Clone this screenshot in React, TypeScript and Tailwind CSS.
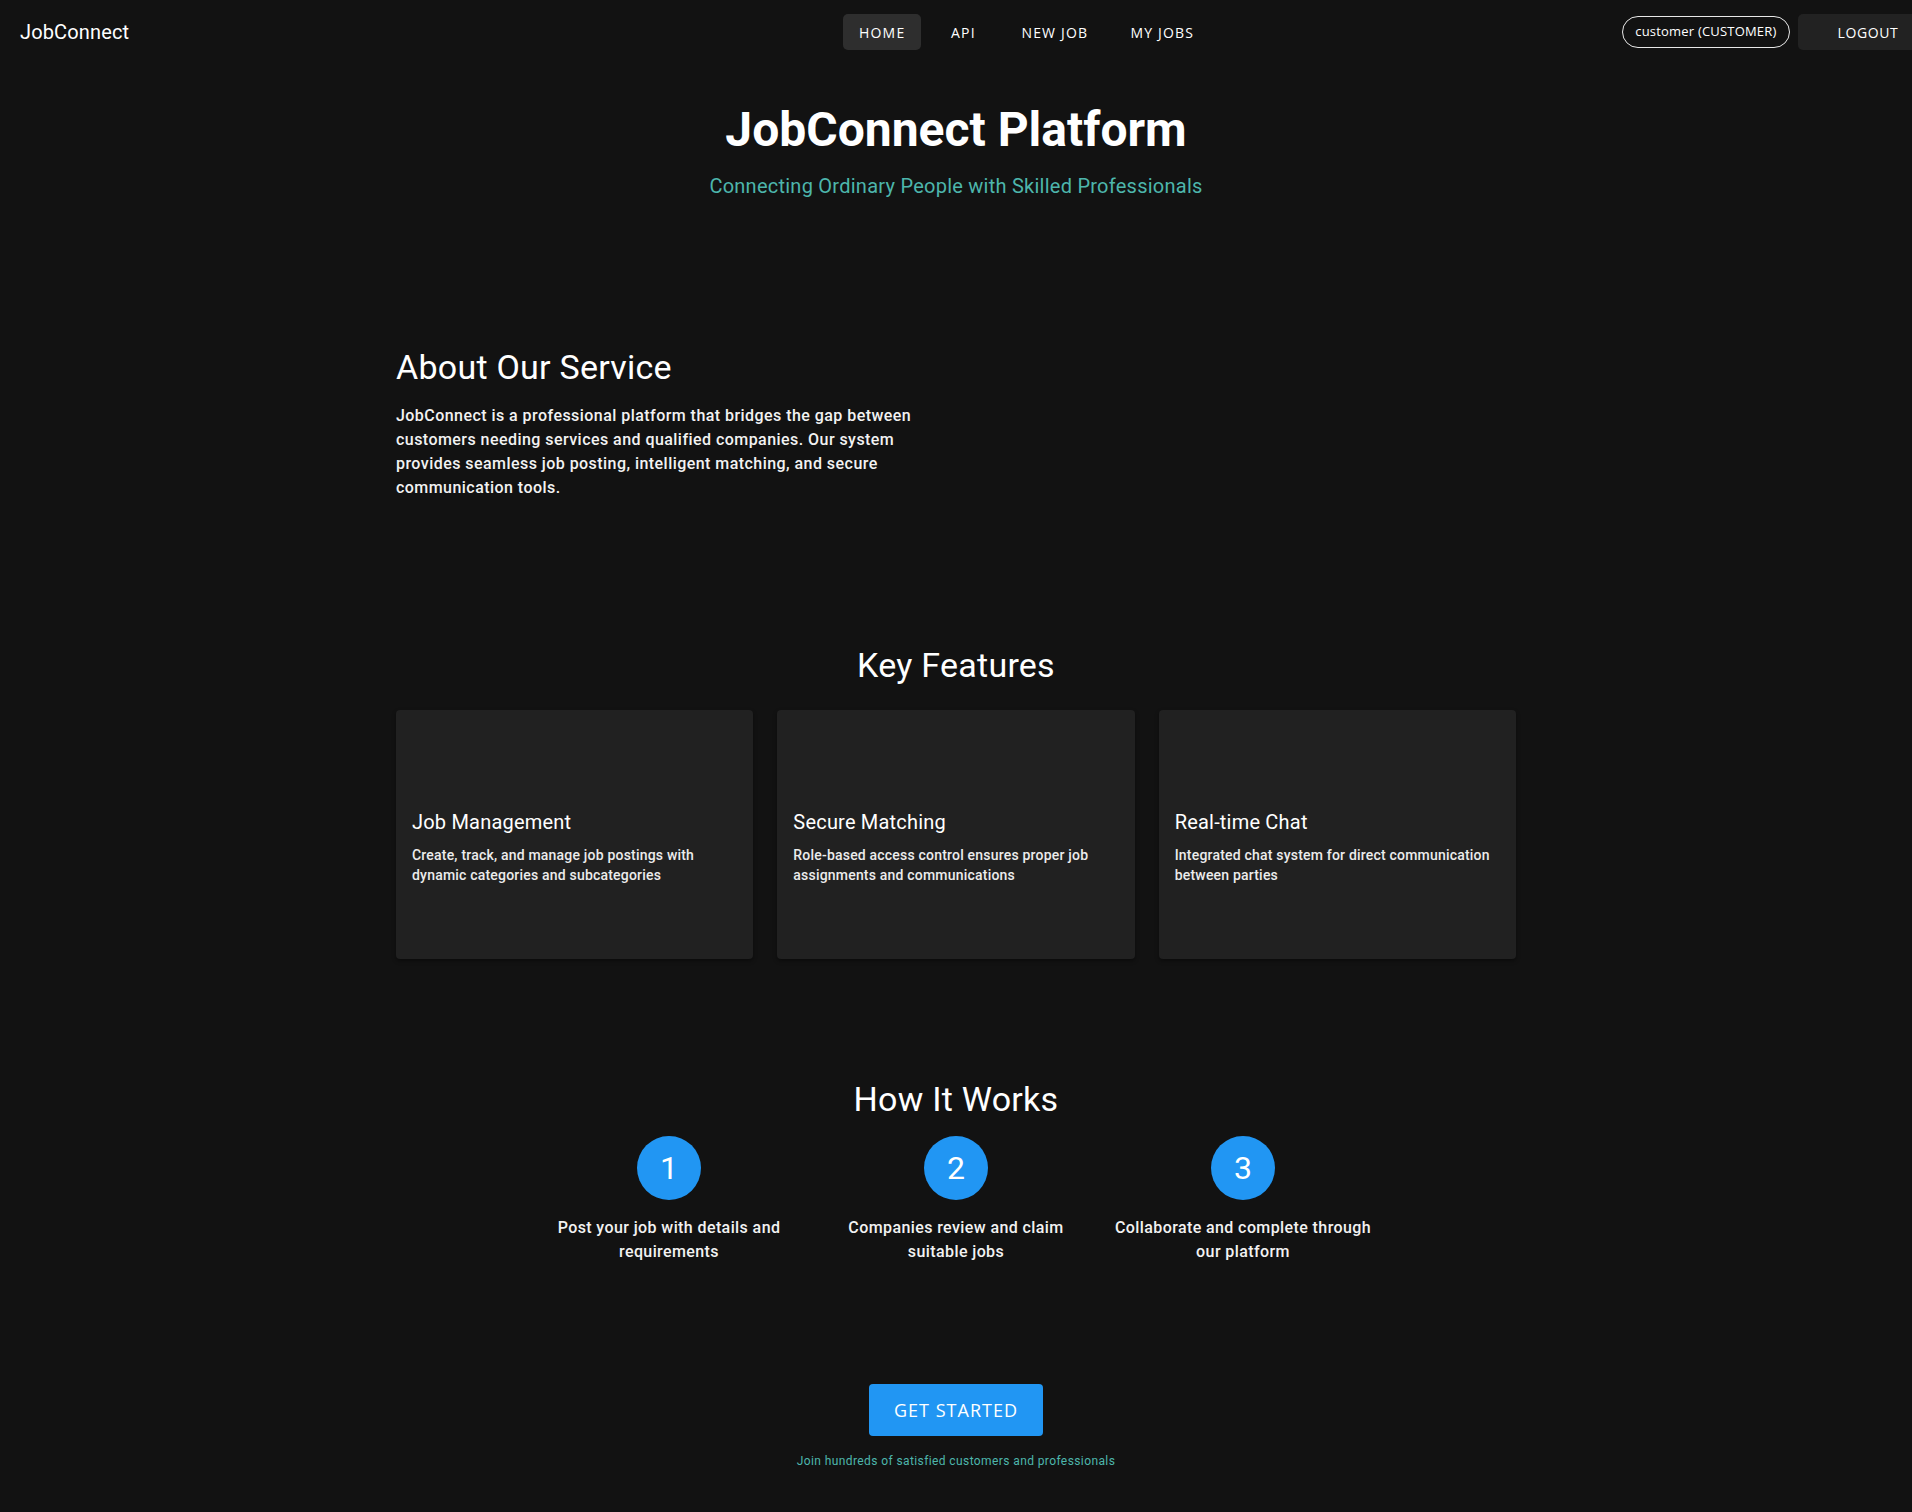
import React from 'react';

// Nav links shown in the top bar
const NAV_LINKS = ['Home', 'API', 'New Job', 'My Jobs'];

const FEATURES = [
  {
    title: 'Job Management',
    text: 'Create, track, and manage job postings with dynamic categories and subcategories',
  },
  {
    title: 'Secure Matching',
    text: 'Role-based access control ensures proper job assignments and communications',
  },
  {
    title: 'Real-time Chat',
    text: 'Integrated chat system for direct communication between parties',
  },
];

const STEPS = [
  'Post your job with details and requirements',
  'Companies review and claim suitable jobs',
  'Collaborate and complete through our platform',
];

function Header() {
  return (
    <header className="h-16 w-full flex items-center pl-5 overflow-hidden bg-[#121212] text-white">
      <div className="w-[823px] shrink-0 text-[20px] tracking-[0.15px] font-['Roboto',sans-serif] leading-none">
        JobConnect
      </div>

      {/* Main navigation */}
      <nav className="flex items-center gap-[10px] shrink-0 font-['Open_Sans',sans-serif]">
        {NAV_LINKS.map((link, i) => (
          <button
            key={link}
            className={`h-9 min-w-16 px-[16px] rounded-[5px] text-[14px] tracking-[1.2px] uppercase ${
              i === 0 ? 'bg-[#2e2e2e]' : 'bg-transparent'
            }`}
          >
            {link}
          </button>
        ))}
      </nav>

      {/* Current user + logout */}
      <div className="ml-[412px] flex items-center gap-2 shrink-0 font-['Open_Sans',sans-serif]">
        <div className="h-8 px-[12px] rounded-full border border-[#e8e8e8] flex items-center text-[13px] tracking-[0.2px]">
          customer (CUSTOMER)
        </div>
        <button className="h-9 pl-10 pr-10 rounded-[5px] bg-[#222222] text-[14px] tracking-[0.6px]">LOGOUT</button>
      </div>
    </header>
  );
}

export default function App() {
  return (
    <div className="min-h-screen bg-[#121212] text-white font-['Roboto',sans-serif]">
      <Header />

      <main className="w-[1120px] mx-auto pb-10">
        {/* Hero */}
        <section className="pt-[38px] text-center">
          <h1 className="text-[48px] font-bold leading-[56px]">JobConnect Platform</h1>
          <p className="mt-[12px] text-[20px] leading-[32px] tracking-[0.25px] text-[#4db6ac]">
            Connecting Ordinary People with Skilled Professionals
          </p>
        </section>

        {/* About */}
        <section className="mt-[144px]">
          <h2 className="text-[34px] leading-[42px] tracking-[0.25px]">About Our Service</h2>
          <p className="mt-[16px] w-[560px] text-[16px] leading-[24px] tracking-[0.45px] font-medium text-[#f2f2f2]">
            JobConnect is a professional platform that bridges the gap between customers needing services and
            qualified companies. Our system provides seamless job posting, intelligent matching, and secure
            communication tools.
          </p>
        </section>

        {/* Key features */}
        <section className="mt-[144px]">
          <h2 className="text-[34px] leading-[42px] tracking-[0.25px] text-center">Key Features</h2>
          <div className="mt-6 grid grid-cols-3 gap-6">
            {FEATURES.map((f) => (
              <div key={f.title} className="h-[249px] rounded bg-[#212121] shadow-[0_2px_4px_rgba(0,0,0,0.4)] p-4">
                {/* icon slot (empty) */}
                <div className="h-20" />
                <h3 className="text-[20px] leading-[32px] tracking-[0.2px] mb-[7px]">{f.title}</h3>
                <p className="text-[14px] leading-[20px] tracking-[0.2px] font-medium text-[#ececec]">{f.text}</p>
              </div>
            ))}
          </div>
        </section>

        {/* How it works */}
        <section className="mt-[119px]">
          <h2 className="text-[34px] leading-[42px] tracking-[0.25px] text-center">How It Works</h2>
          <div className="mt-4 flex justify-center">
            {STEPS.map((step, i) => (
              <div key={step} className="w-[287px] px-2 flex flex-col items-center text-center">
                <div className="w-16 h-16 rounded-full bg-[#2196f3] flex items-center justify-center text-[32px] mb-4">
                  {i + 1}
                </div>
                <p className="text-[16px] leading-[24px] tracking-[0.4px] font-medium text-[#f2f2f2]">{step}</p>
              </div>
            ))}
          </div>
        </section>

        {/* Call to action */}
        <section className="mt-[120px] flex flex-col items-center">
          <button className="w-[174px] h-[52px] rounded bg-[#2196f3] text-[18px] tracking-[1px] font-['Open_Sans',sans-serif]">
            GET STARTED
          </button>
          <p className="mt-[15px] text-[12px] leading-[20px] text-[#4db6ac] tracking-[0.4px]">
            Join hundreds of satisfied customers and professionals
          </p>
        </section>
      </main>
    </div>
  );
}
